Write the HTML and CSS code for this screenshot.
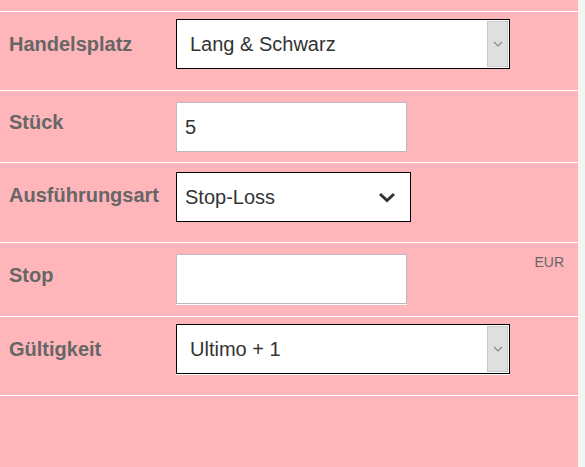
FILE: index.html
```html
<!DOCTYPE html>
<html lang="de">
<head>
<meta charset="utf-8">
<title>Order</title>
<link rel="stylesheet" href="styles.css">
</head>
<body>
<div class="form">
  <div class="row row--h79">
    <label class="label" for="platz">Handelsplatz</label>
    <div class="select select--classic">
      <select id="platz"><option>Lang &amp; Schwarz</option></select>
      <span class="select-btn"><svg width="10" height="6" viewBox="0 0 10 6"><path d="M1 1 L5 5 L9 1" fill="none" stroke="#8a8a8a" stroke-width="1.2"/></svg></span>
    </div>
  </div>
  <div class="row row--h72">
    <label class="label label--tight" for="stueck">Stück</label>
    <input class="input" id="stueck" type="text" value="5">
  </div>
  <div class="row row--h80">
    <label class="label" for="art">Ausführungsart</label>
    <div class="select select--modern">
      <select id="art"><option>Stop-Loss</option></select>
      <svg class="chevron" width="18" height="11" viewBox="0 0 18 11"><path d="M2 2 L9 8.5 L16 2" fill="none" stroke="#333" stroke-width="3"/></svg>
    </div>
  </div>
  <div class="row row--h74">
    <label class="label" for="stop">Stop</label>
    <input class="input input--lined" id="stop" type="text" value="">
    <span class="unit">EUR</span>
  </div>
  <div class="row row--h79">
    <label class="label" for="gueltig">Gültigkeit</label>
    <div class="select select--classic select--lined">
      <select id="gueltig"><option>Ultimo + 1</option></select>
      <span class="select-btn"><svg width="10" height="6" viewBox="0 0 10 6"><path d="M1 1 L5 5 L9 1" fill="none" stroke="#8a8a8a" stroke-width="1.2"/></svg></span>
    </div>
  </div>
  <div class="row row--end"></div>
</div>
</body>
</html>
```

FILE: styles.css
```css
html, body {
  margin: 0;
  padding: 0;
}

body {
  background: #f4f4f4;
  font-family: "Liberation Sans", Arial, sans-serif;
}

.form {
  width: 578px;
  min-height: 100vh;
  box-sizing: border-box;
  padding-top: 11px;
  background: #ffb6bb;
}

.row {
  display: flex;
  align-items: flex-start;
  box-sizing: border-box;
  border-top: 1px solid #ffffff;
}

.row--h79 { height: 79px; }
.row--h72 { height: 72px; }
.row--h80 { height: 80px; }
.row--h74 { height: 74px; }
.row--end { height: 1px; }

.label {
  width: 167px;
  flex: none;
  padding-left: 9px;
  padding-top: 21px;
  font-size: 20px;
  line-height: 23px;
  font-weight: bold;
  color: #666666;
}

.label--tight {
  padding-top: 20px;
}

.select {
  position: relative;
  flex: none;
  margin-top: 7px;
}

.select select {
  display: block;
  width: 100%;
  height: 50px;
  box-sizing: border-box;
  margin: 0;
  border: 1px solid #000000;
  border-radius: 0;
  background: #ffffff;
  color: #333333;
  font-family: "Liberation Sans", Arial, sans-serif;
  font-size: 20px;
  -webkit-appearance: none;
  appearance: none;
  outline: none;
}

.select--classic {
  width: 334px;
}

.select--classic select {
  padding: 0 30px 0 13px;
}

.select--lined {
  box-shadow: 0 1px 0 #ffffff;
}

.select-btn {
  position: absolute;
  top: 2px;
  right: 2px;
  bottom: 2px;
  width: 21px;
  box-sizing: border-box;
  display: flex;
  align-items: center;
  justify-content: center;
  background: #dfdfdf;
  border: 1px solid #c8c8c8;
  pointer-events: none;
}

.select--modern {
  width: 235px;
  margin-top: 9px;
}

.select--modern select {
  padding: 0 40px 0 8px;
}

.chevron {
  position: absolute;
  top: 20px;
  right: 15px;
  pointer-events: none;
}

.input {
  flex: none;
  width: 231px;
  height: 50px;
  box-sizing: border-box;
  margin: 11px 0 0;
  padding: 0 8px;
  border: 1px solid #bbbbbb;
  border-radius: 0;
  background: #ffffff;
  color: #333333;
  font-family: "Liberation Sans", Arial, sans-serif;
  font-size: 20px;
  outline: none;
}

.input--lined {
  box-shadow: 0 1px 0 #ffffff;
}

.unit {
  margin: 11px 14px 0 auto;
  font-size: 14px;
  line-height: 16px;
  color: #666666;
}
```
